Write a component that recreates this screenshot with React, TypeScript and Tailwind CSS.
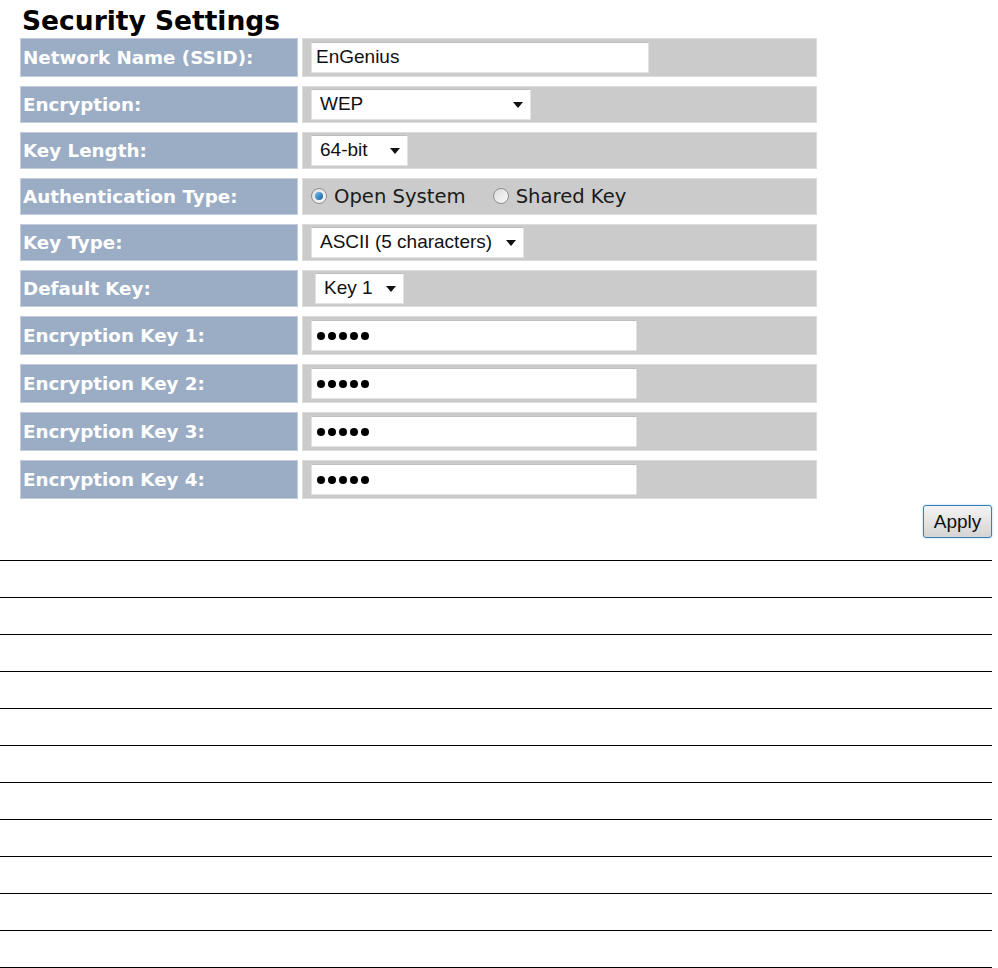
const LABEL_FONT = "font-['DejaVu_Sans',Verdana,sans-serif]";

function Arrow() {
  return (
    <svg width="10" height="6" viewBox="0 0 10 6" className="shrink-0">
      <path d="M0 0h10L5 6z" fill="#111" />
    </svg>
  );
}

function SelectBox({ value, width, offset = 0 }: { value: string; width: number; offset?: number }) {
  return (
    <div
      className="h-[31px] flex items-center justify-between bg-white border border-[#e2e2e2] border-t-[#bdbdbd] pl-[8px] pr-[7px] text-[19px] text-[#111] font-['Liberation_Sans',Arial,sans-serif]"
      style={{ width, marginLeft: offset }}
    >
      <span>{value}</span>
      <Arrow />
    </div>
  );
}

function TextBox({ value, width }: { value: string; width: number }) {
  return (
    <div
      className="h-[31px] flex items-center bg-white border border-[#e2e2e2] border-t-[#bdbdbd] pl-[4px] text-[19px] text-[#111] font-['Liberation_Sans',Arial,sans-serif]"
      style={{ width }}
    >
      {value}
    </div>
  );
}

function PasswordBox() {
  return (
    <div className="h-[31px] w-[326px] flex items-center gap-[3px] bg-white border border-[#e2e2e2] border-t-[#bdbdbd] pl-[5px]">
      {[0, 1, 2, 3, 4].map((i) => (
        <div key={i} className="w-[8px] h-[8px] rounded-full bg-black" />
      ))}
    </div>
  );
}

function Radio({ checked, label }: { checked?: boolean; label: string }) {
  return (
    <div className="flex items-center gap-[7px]">
      <div className="w-[16px] h-[16px] rounded-full border border-[#8f8f8f] bg-gradient-to-br from-[#dcdcdc] to-[#fbfbfb] flex items-center justify-center">
        {checked && <div className="w-[8px] h-[8px] rounded-full bg-gradient-to-br from-[#6cc0f0] to-[#1a5f9a]" />}
      </div>
      <span className={`${LABEL_FONT} text-[19.6px] text-[#1a1a1a]`}>{label}</span>
    </div>
  );
}

function Row({ label, h = 37, children }: { label: string; h?: number; children: React.ReactNode }) {
  return (
    <div className="flex gap-[4px]" style={{ height: h }}>
      <div
        className={`w-[278px] flex items-center pl-[2px] bg-[#9badc5] border border-[#c3cddb] text-white font-bold text-[18.3px] ${LABEL_FONT}`}
      >
        {label}
      </div>
      <div className="flex-1 flex items-center pl-[8px] bg-[#cbcbcb] border border-[#dcdcdc]">{children}</div>
    </div>
  );
}

export default function App() {
  return (
    <div className="w-[992px] bg-white pb-[1px]">
      <h1 className={`pl-[22px] pt-[6px] mb-[8px] h-[30px] leading-[30px] text-[26.5px] font-bold text-black ${LABEL_FONT}`}>
        Security Settings
      </h1>

      <div className="ml-[20px] w-[797px] flex flex-col gap-[9px]">
        <Row label="Network Name (SSID):" h={39}>
          <TextBox value="EnGenius" width={338} />
        </Row>
        <Row label="Encryption:">
          <SelectBox value="WEP" width={220} />
        </Row>
        <Row label="Key Length:">
          <SelectBox value="64-bit" width={97} />
        </Row>
        <Row label="Authentication Type:">
          <div className="flex items-center gap-[27px]">
            <Radio checked label="Open System" />
            <Radio label="Shared Key" />
          </div>
        </Row>
        <Row label="Key Type:">
          <SelectBox value="ASCII (5 characters)" width={213} />
        </Row>
        <Row label="Default Key:">
          <SelectBox value="Key 1" width={89} offset={4} />
        </Row>
        {[1, 2, 3, 4].map((n) => (
          <Row key={n} label={`Encryption Key ${n}:`} h={39}>
            <PasswordBox />
          </Row>
        ))}
      </div>

      <div className="flex justify-end mt-[6px]">
        <button className="w-[69px] h-[33px] rounded-[3px] border border-[#3c7fb1] shadow-[0_0_2px_#7fc4ef] bg-gradient-to-b from-[#f4f4f4] to-[#d4d4d4] text-[19px] text-[#111] font-['Liberation_Sans',Arial,sans-serif] leading-none">
          Apply
        </button>
      </div>

      <div className="mt-[22px] flex flex-col gap-[36px]">
        {Array.from({ length: 12 }).map((_, i) => (
          <div key={i} className="h-px bg-black" />
        ))}
      </div>
    </div>
  );
}
